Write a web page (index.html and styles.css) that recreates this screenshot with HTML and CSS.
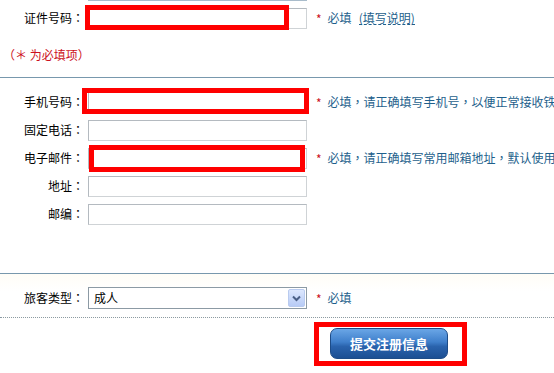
FILE: index.html
```html
<!DOCTYPE html>
<html lang="zh-CN">
<head>
<meta charset="utf-8">
<title>注册信息</title>
<link rel="stylesheet" href="styles.css">
</head>
<body>
<div class="page">
  <section class="sec sec-top">
    <div class="prev-edge"></div>
    <div class="row">
      <span class="lbl">证件号码：</span>
      <span class="txt"></span>
      <span class="req">*</span><span class="note">必填</span>
      <a class="help">(填写说明)</a>
      <span class="mark mark-id"></span>
    </div>
    <p class="must">（＊ 为必填项）</p>
  </section>

  <section class="sec sec-contact">
    <div class="row">
      <span class="lbl">手机号码：</span>
      <span class="txt"></span>
      <span class="req">*</span><span class="note">必填，请正确填写手机号，以便正常接收铁路客服中心发送的短信</span>
      <span class="mark mark-phone"></span>
    </div>
    <div class="row">
      <span class="lbl">固定电话：</span>
      <span class="txt"></span>
    </div>
    <div class="row">
      <span class="lbl">电子邮件：</span>
      <span class="txt"></span>
      <span class="req">*</span><span class="note">必填，请正确填写常用邮箱地址，默认使用该邮箱作为登录名</span>
      <span class="mark mark-mail"></span>
    </div>
    <div class="row">
      <span class="lbl">地址：</span>
      <span class="txt"></span>
    </div>
    <div class="row">
      <span class="lbl">邮编：</span>
      <span class="txt"></span>
    </div>
  </section>

  <section class="sec-type">
    <div class="row">
      <span class="lbl">旅客类型：</span>
      <div class="sel">
        <span class="sel-val">成人</span>
        <span class="sel-btn">
          <svg width="9" height="7" viewBox="0 0 9 7"><path d="M1 1.5 L4.5 5 L8 1.5" fill="none" stroke="#4a5f86" stroke-width="2"/></svg>
        </span>
      </div>
      <span class="req">*</span><span class="note">必填</span>
    </div>
  </section>

  <div class="submit-row">
    <button class="btn" type="button">提交注册信息</button>
    <span class="mark mark-btn"></span>
  </div>
</div>
</body>
</html>
```

FILE: styles.css
```css
html, body {
  margin: 0;
  padding: 0;
  background: #ffffff;
  overflow: hidden;
}
.page {
  width: 554px;
  height: 373px;
  overflow: hidden;
  font-family: "Noto Sans CJK TC", "Noto Sans CJK SC", "DejaVu Sans", sans-serif;
  font-feature-settings: "locl" 0;
  font-size: 12px;
  color: #000;
}
.sec {
  position: relative;
  border-bottom: 1px solid #7898ad;
  box-sizing: border-box;
}
.sec-top {
  height: 78px;
}
.prev-edge {
  width: 219px;
  height: 1px;
  margin-left: 88px;
  background: #a9bccb;
}
.sec-top .row {
  margin-top: 4px;
  height: 26px;
}
.row {
  position: relative;
  display: flex;
  align-items: center;
  height: 28px;
  white-space: nowrap;
}
.lbl {
  width: 84px;
  margin-right: 4px;
  text-align: right;
  flex: none;
  line-height: 14px;
}
.txt {
  flex: none;
  width: 219px;
  height: 21px;
  box-sizing: border-box;
  border: 1px solid #cfd3d6;
  border-top-color: #b4bac0;
  border-left-color: #b4bac0;
  background: #fff;
}
.req {
  color: #cc1122;
  margin-left: 9px;
  margin-right: 6px;
  font-size: 12px;
}
.note {
  color: #1e5f8c;
  line-height: 14px;
}
.help {
  color: #1e5f8c;
  margin-left: 7px;
  line-height: 13px;
  border-bottom: 1px dashed #1e5f8c;
}
.must {
  margin: 17px 0 0 3px;
  color: #cc1122;
  line-height: 14px;
  font-size: 12px;
}
.sec-contact {
  height: 196px;
  padding-top: 10px;
}
.sec-type {
  height: 44px;
  padding-top: 10px;
  box-sizing: border-box;
  border-bottom: 1px dotted #8a9aa6;
  background: linear-gradient(#fffdf6, #ffffff 40%);
}
.sel {
  flex: none;
  width: 219px;
  height: 22px;
  box-sizing: border-box;
  border: 1px solid #8c9aa4;
  display: flex;
  align-items: center;
  background: #fff;
}
.sel-val {
  flex: 1;
  padding-left: 5px;
  line-height: 14px;
}
.sel-btn {
  flex: none;
  width: 15px;
  height: 16px;
  margin-right: 1px;
  border: 1px solid #b9cbef;
  border-radius: 2px;
  background: linear-gradient(#dce7fe, #b7cbf6);
  display: flex;
  align-items: center;
  justify-content: center;
}
.sel-btn svg { display: block; }
.submit-row {
  position: relative;
  height: 55px;
  padding: 10px 0 0 330px;
  box-sizing: border-box;
}
.btn {
  display: block;
  width: 118px;
  height: 31px;
  border: 1px solid #1d4c88;
  border-radius: 7px;
  background: linear-gradient(#6aa6e6 0%, #3f7fcb 45%, #2a63ad 60%, #1c4f93 100%);
  color: #fff;
  font-family: "Noto Sans CJK TC", "Noto Sans CJK SC", sans-serif;
  font-feature-settings: "locl" 0;
  font-size: 13px;
  font-weight: bold;
  padding: 0;
}
.mark {
  position: absolute;
  border: 5px solid #ff0000;
  box-sizing: border-box;
  pointer-events: none;
}
.mark-id {
  left: 85px;
  top: 0px;
  width: 204px;
  height: 25px;
}
.mark-phone {
  left: 82px;
  top: 0px;
  width: 227px;
  height: 26px;
}
.mark-mail {
  left: 89px;
  top: 1px;
  width: 216px;
  height: 27px;
}
.mark-btn {
  left: 314px;
  top: 4px;
  width: 153px;
  height: 44px;
}
```
